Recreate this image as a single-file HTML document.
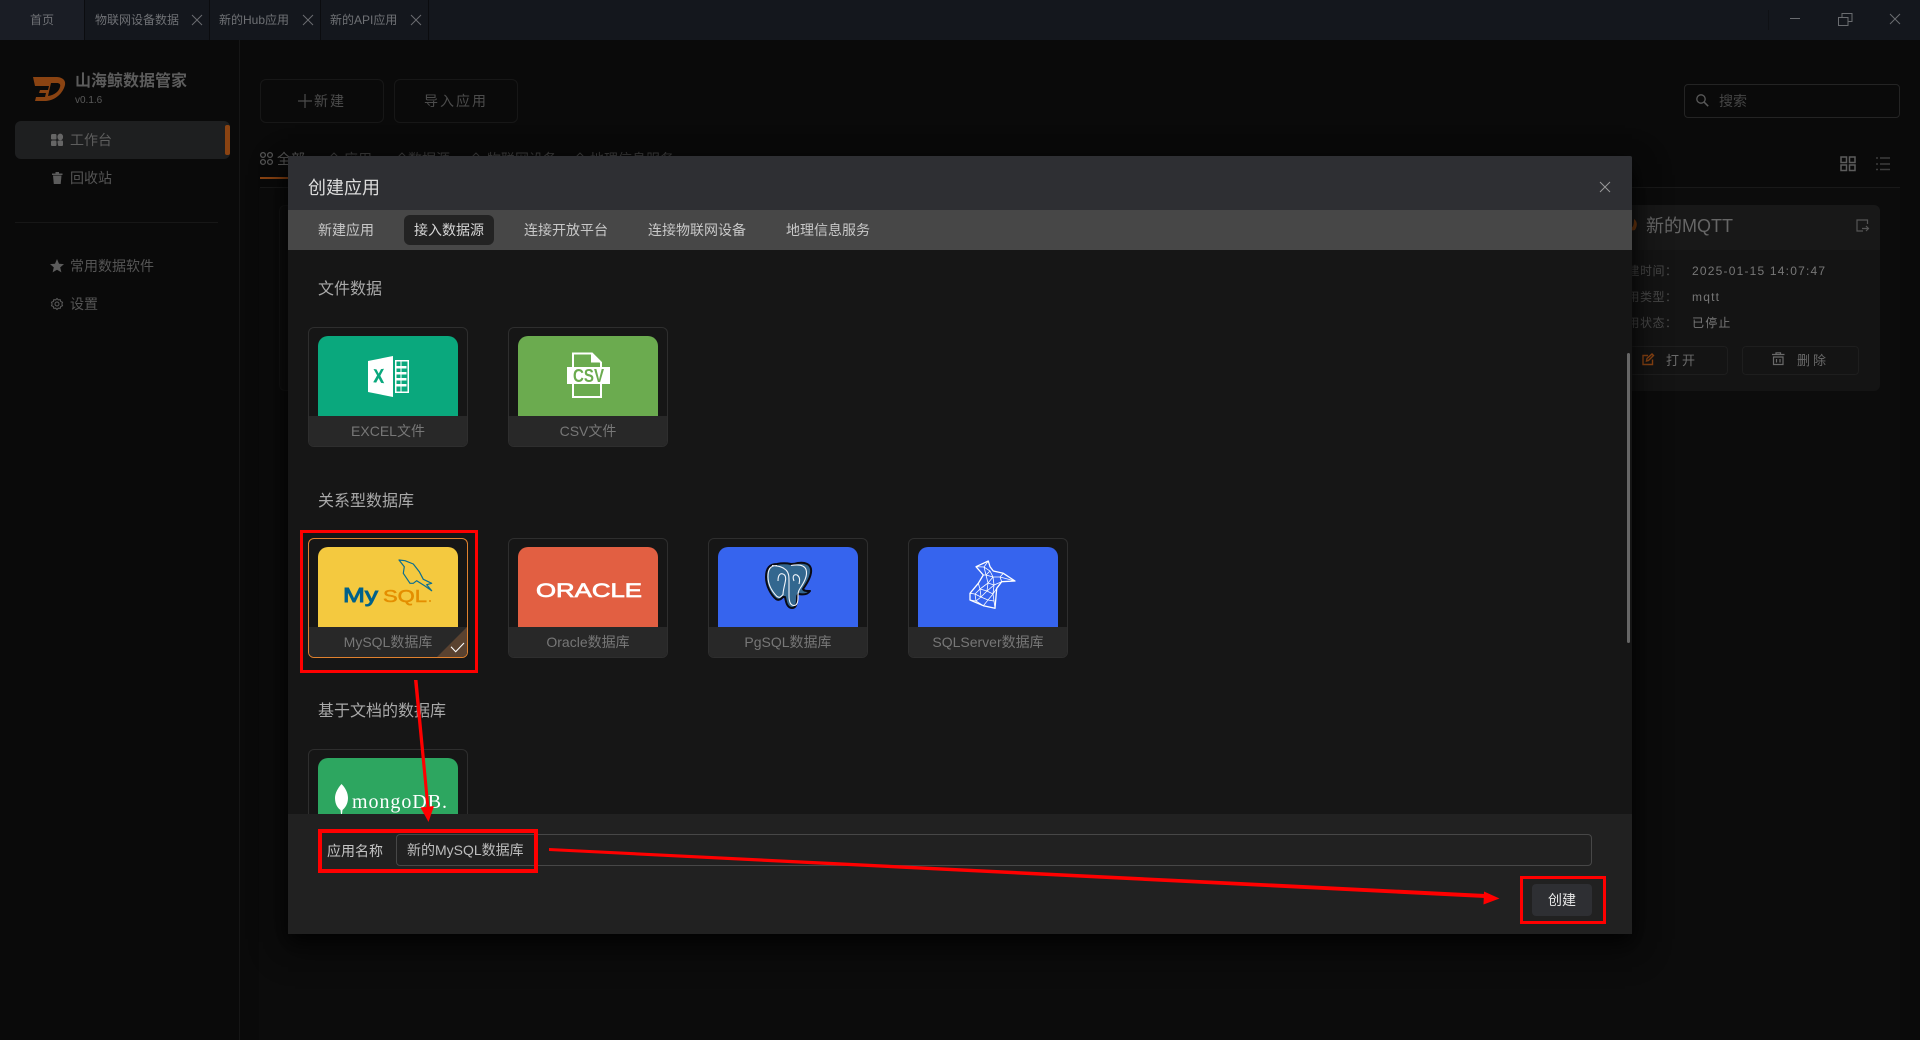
<!DOCTYPE html>
<html lang="zh">
<head>
<meta charset="utf-8">
<title>山海鲸数据管家</title>
<style>
*{box-sizing:border-box;margin:0;padding:0}
html,body{width:1920px;height:1040px;overflow:hidden;background:#0a0a0a}
body{position:relative;font-family:"Liberation Sans","Noto Sans CJK SC",sans-serif;font-size:14px;color:#777}
.a{position:absolute;white-space:nowrap}
.c{display:flex;align-items:center;justify-content:center}
svg{position:absolute;overflow:visible}
.tab{position:absolute;top:0;height:40px;line-height:40px;font-size:12px;color:#6f7175;border-right:1px solid #0b0c0f;background:#14171d}
.x{stroke:#6a6c70;stroke-width:1;fill:none}
.side{position:absolute;left:70px;font-size:14px;line-height:20px;color:#555}
.bgbtn{position:absolute;top:79px;width:124px;height:44px;border:1px solid #171717;border-radius:6px;color:#4c4c4c;font-size:14px;letter-spacing:2px;display:flex;align-items:center;justify-content:center}
.modal{position:absolute;left:288px;top:156px;width:1344px;height:778px;background:#161616;overflow:hidden;border-radius:2px 2px 0 0}
.shadow{position:absolute;left:288px;top:156px;width:1344px;height:778px;box-shadow:0 12px 32px 4px rgba(0,0,0,.36),0 8px 20px rgba(0,0,0,.72)}
.mt{position:absolute;top:54px;left:0;width:1344px;height:40px;background:#474747}
.mtab{position:absolute;top:54px;height:40px;line-height:40px;font-size:14px;color:#c8c8c8}
.sec{position:absolute;left:30px;font-size:16px;line-height:24px;color:#a9a9a9}
.card{position:absolute;width:160px;height:120px;border:1px solid #2e2e2e;border-radius:6px;background:#161616;overflow:hidden}
.img{position:absolute;left:9px;top:8px;width:140px;height:80px;border-radius:10px 10px 0 0;overflow:hidden}
.lb{position:absolute;left:0;top:88px;width:158px;height:30px;background:#282828;line-height:30px;text-align:center;font-size:14px;color:#777}
.rl{position:absolute;font-size:12px;color:#484848;left:1615px;line-height:16px;letter-spacing:.5px}
.rv{position:absolute;font-size:12px;color:#777;left:1692px;letter-spacing:1.2px;line-height:16px}
</style>
</head>
<body>
<!-- title bar -->
<div class="a" style="left:0;top:0;width:1920px;height:40px;background:#14171d"></div>
<div class="tab c" style="left:0;width:85px;background:#1a1d25;color:#6f7175">首页</div>
<div class="tab" style="left:85px;width:125px;padding-left:10px">物联网设备数据</div>
<div class="tab" style="left:210px;width:111px;padding-left:9px">新的Hub应用</div>
<div class="tab" style="left:321px;width:108px;padding-left:9px">新的API应用</div>
<svg style="left:0;top:0" width="1920" height="40">
<path class="x" d="M192 15l10 10m0-10l-10 10M303 15l10 10m0-10l-10 10M411 15l10 10m0-10l-10 10"/>
<path d="M1768.500 10v20" stroke="#0f1115"/>
<path class="x" d="M1790 18.500h10M1838.500 17.500h9.500v8h-9.500zM1842 17v-3.500h10v8h-4M1890 14l10 10m0-10l-10 10"/>
</svg>

<!-- sidebar -->
<div class="a" style="left:239px;top:40px;width:1px;height:1000px;background:#161616"></div>
<svg style="left:33px;top:77px" width="33" height="24" viewBox="0 0 33 24">
<path d="M0 0h23c6 0 10 3 9 8-2 8-9 15-19 16H2l1-4h9l1-4H6l1-3h8l1-4H2zM18 6l-3 13c7-1 11-5 12-9 1-3-1-4-3-4z" fill="#8a4312" fill-rule="evenodd"/>
</svg>
<div class="a" style="left:75px;top:71px;font-size:16px;font-weight:700;line-height:22px;color:#5c5c5c">山海鲸数据管家</div>
<div class="a" style="left:75px;top:94px;font-size:10px;line-height:14px;color:#5a5a5a">v0.1.6</div>
<div class="a" style="left:15px;top:121px;width:215px;height:38px;background:#1e1f20;border-radius:6px"></div>
<div class="a" style="left:225px;top:125px;width:5px;height:30px;background:#8a4312;border-radius:2px"></div>
<svg style="left:51px;top:134px" width="12" height="12"><path d="M0 1.500q0-1.500 1.500-1.500h3q1 0 1 1.500v3q0 1-1 1h-3q-1.500 0-1.500-1zM6.500 3a2.800 2.800 0 1 1 5.500 0a2.800 2.800 0 1 1-5.500 0zM0 8q0-1.500 1.500-1.500h3q1 0 1 1.500v3q0 1-1 1h-3q-1.500 0-1.500-1zM6.500 8q0-1.500 1.500-1.500h3q1 0 1 1.500v3q0 1-1 1h-3q-1 0-1-1z" fill="#666"/></svg>
<div class="side" style="top:130px;color:#5e5e5e">工作台</div>
<svg style="left:52px;top:172px" width="11" height="12"><path d="M0 1.500h10.500v1.500H0zM3.500 0h3.500v1.500H3.500zM1 3.500h8.500l-.8 8.500H1.800z" fill="#5c5c5c"/></svg>
<div class="side" style="top:168px">回收站</div>
<div class="a" style="left:15px;top:222px;width:203px;height:1px;background:#171717"></div>
<svg style="left:50px;top:259px" width="14" height="14" viewBox="0 0 14 14"><path d="M7 0l2 4.700 5 .4-3.800 3.300 1.200 5L7 10.700 2.600 13.400l1.200-5L0 5.100l5-.4z" fill="#5c5c5c"/></svg>
<div class="side" style="top:256px">常用数据软件</div>
<svg style="left:51px;top:298px" width="12" height="12" viewBox="0 0 12 12"><circle cx="6" cy="6" r="2" fill="none" stroke="#5c5c5c"/><path d="M6 .5l1.300 1.400 1.900-.2.500 1.800 1.800.8-.6 1.700.6 1.700-1.800.8-.5 1.800-1.900-.2L6 11.500 4.700 10.100l-1.900.2-.5-1.800-1.800-.8.6-1.700-.6-1.700 1.800-.8.500-1.800 1.900.2z" fill="none" stroke="#5c5c5c"/></svg>
<div class="side" style="top:294px">设置</div>

<!-- background content -->
<div class="bgbtn" style="left:260px"><svg style="position:static;margin-right:2px" width="14" height="14"><path d="M7 0v14M0 7h14" stroke="#4c4c4c" stroke-width="1.200"/></svg>新建</div>
<div class="bgbtn" style="left:394px">导入应用</div>
<svg style="left:260px;top:152px" width="14" height="14"><g fill="none" stroke="#555" stroke-width="1.300"><circle cx="3" cy="3" r="2.400"/><circle cx="10" cy="3" r="2.400"/><circle cx="3" cy="10" r="2.400"/><circle cx="10" cy="10" r="2.400"/></g></svg>
<svg style="left:328px;top:150px" width="260" height="8"><path d="M2 7l4-4 4 4M70 7l4-4 4 4M144 7l4-4 4 4M248 7l4-4 4 4" fill="none" stroke="#3e3e3e"/></svg>
<div class="a" style="left:277px;top:150px;font-size:14px;line-height:18px;color:#555">全部</div>
<div class="a" style="left:344px;top:150px;font-size:14px;line-height:18px;color:#3e3e3e">应用</div>
<div class="a" style="left:408px;top:150px;font-size:14px;line-height:18px;color:#3e3e3e">数据源</div>
<div class="a" style="left:487px;top:150px;font-size:14px;line-height:18px;color:#3e3e3e">物联网设备</div>
<div class="a" style="left:590px;top:150px;font-size:14px;line-height:18px;color:#3e3e3e">地理信息服务</div>
<div class="a" style="left:260px;top:177px;width:60px;height:2px;background:#8a4312"></div>
<div class="a" style="left:260px;top:187px;width:1640px;height:1px;background:#191919"></div>
<div class="a" style="left:259px;top:188px;width:1641px;height:852px;background:#0c0c0c"></div>
<div class="a" style="left:279px;top:205px;width:40px;height:186px;background:#0e0e0e;border:1px solid #141414;border-radius:6px"></div>
<div class="a" style="left:1500px;top:205px;width:380px;height:186px;background:#141414;border-radius:6px"></div>
<div class="a" style="left:1500px;top:205px;width:380px;height:45px;background:#181818;border-radius:6px 6px 0 0"></div>
<svg style="left:1630px;top:218px" width="10" height="14"><path d="M4 1c3 2 4 6 1 11-3 1-5 0-5-2 3 0 4-3 4-9z" fill="#7a3d10"/></svg>
<div class="a" style="left:1646px;top:213px;font-size:18px;line-height:26px;color:#666">新的MQTT</div>
<svg style="left:1856px;top:219px" width="13" height="13"><path d="M11.500 5V1H1v11h6M6 9.500h6.500M10 7l2.500 2.500L10 12" fill="none" stroke="#555" stroke-width="1.200"/></svg>
<div class="rl" style="top:263px">创建时间：</div><div class="rv" style="top:263px">2025-01-15 14:07:47</div>
<div class="rl" style="top:289px">应用类型：</div><div class="rv" style="top:289px">mqtt</div>
<div class="rl" style="top:315px">应用状态：</div><div class="rv" style="top:315px">已停止</div>
<div class="a" style="left:1612px;top:346px;width:116px;height:29px;border:1px solid #1e1e1e;border-radius:4px"></div>
<div class="a" style="left:1742px;top:346px;width:117px;height:29px;border:1px solid #1e1e1e;border-radius:4px"></div>
<svg style="left:1642px;top:353px" width="12" height="13"><path d="M10.500 6.500V11.500H1V2.500h5M4.500 8l.5-2.500 5-4.500 1.500 1.500-5 5z" fill="none" stroke="#8a4312" stroke-width="1.400"/></svg>
<div class="a" style="left:1666px;top:352px;font-size:13px;line-height:17px;letter-spacing:3px;color:#6a6a6a">打开</div>
<svg style="left:1772px;top:352px" width="13" height="13"><path d="M0 2.500h12.500M4 2.500V.8h4.500v1.700M1.500 5h9.500v7.500H1.500zM4.500 7v3.500M8 7v3.500" fill="none" stroke="#6a6a6a" stroke-width="1.200"/></svg>
<div class="a" style="left:1797px;top:352px;font-size:13px;line-height:17px;letter-spacing:3px;color:#6a6a6a">删除</div>
<svg style="left:1696px;top:94px" width="13" height="13"><circle cx="5" cy="5" r="4.200" fill="none" stroke="#5a5a5a" stroke-width="1.300"/><path d="M8.200 8.200l4 4" stroke="#5a5a5a" stroke-width="1.500"/></svg>
<div class="a" style="left:1684px;top:84px;width:216px;height:34px;border:1px solid #242424;border-radius:4px"></div>
<div class="a" style="left:1719px;top:92px;font-size:14px;line-height:18px;color:#454545">搜索</div>
<svg style="left:1840px;top:155px" width="60" height="17"><g fill="none" stroke="#5c5c5c" stroke-width="1.500"><rect x="1" y="2" width="5.500" height="5.500"/><rect x="9.500" y="2" width="5.500" height="5.500"/><rect x="1" y="10" width="5.500" height="5.500"/><rect x="9.500" y="10" width="5.500" height="5.500"/></g><path d="M36 3h2M40 3h10M36 9h2M40 9h10M36 14.500h2M40 14.500h10" stroke="#3d3d3d" stroke-width="1.400"/></svg>

<div class="shadow"></div>
<!-- modal -->
<div class="modal">
  <div class="a" style="left:0;top:0;width:1344px;height:54px;background:#2e2f33"></div>
  <div class="a" style="left:20px;top:19px;font-size:18px;line-height:26px;color:#dcdcdc">创建应用</div>
  <svg style="left:1312px;top:26px" width="11" height="11"><path d="M0 0l10 10m0-10L0 10" stroke="#999" fill="none"/></svg>
  <div class="mt"></div>
  <div class="mtab" style="left:30px">新建应用</div>
  <div class="a" style="left:116px;top:59px;width:90px;height:30px;border-radius:6px;background:#232323"></div>
  <div class="mtab" style="left:126px;color:#d6d6d6">接入数据源</div>
  <div class="mtab" style="left:236px">连接开放平台</div>
  <div class="mtab" style="left:360px">连接物联网设备</div>
  <div class="mtab" style="left:498px">地理信息服务</div>

  <div class="sec" style="top:122px">文件数据</div>
  <div class="card" style="left:20px;top:171px">
    <div class="img" style="background:#0aa87d">
      <svg style="left:0;top:0" width="140" height="80">
        <path d="M50 25l25-5v41l-25-5z" fill="#fff"/>
        <path d="M77 24h14v33H77z" fill="#fff"/>
        <path d="M78.500 25.500h11v30h-11z" fill="#0aa87d"/>
        <path d="M77 30h11.500v2.500H77zM77 36h11.500v2.500H77zM77 42h11.500v2.500H77zM77 48h11.500v2.500H77zM82.500 25.500h1v30h-1z" fill="#fff"/>
        <path d="M55.500 33l3 .4 2.200 4.200 2.300-4.500 3-.4-3.700 7 3.900 7.500-3.100-.3-2.500-4.800-2.400 4.500-3-.3 3.900-6.900z" fill="#0aa87d"/>
      </svg>
    </div>
    <div class="lb">EXCEL文件</div>
  </div>
  <div class="card" style="left:220px;top:171px">
    <div class="img" style="background:#6bab4f">
      <svg style="left:0;top:0" width="140" height="80">
        <path d="M55 32V17.500h19l9 9V32M83 48v13H55V48" fill="none" stroke="#fff" stroke-width="2"/>
        <path d="M73 17.500v9h10" fill="#fff"/>
        <rect x="49" y="31" width="43" height="17" fill="#fff"/>
        <text x="70.500" y="46" font-size="18" font-weight="700" text-anchor="middle" fill="#6bab4f" textLength="31" lengthAdjust="spacingAndGlyphs">CSV</text>
      </svg>
    </div>
    <div class="lb">CSV文件</div>
  </div>

  <div class="sec" style="top:334px">关系型数据库</div>
  <div class="card" style="left:20px;top:382px;border-color:#e0812e">
    <div class="img" style="background:#f4c93f">
      <svg style="left:0;top:0" width="140" height="80">
        <path d="M81 13L87 13.700 95.300 17 101.300 24.700 105.300 32.300 113.700 36.300 108.700 37.700 113.700 43.700 107 39 98.700 33.700 95.300 36.300 92 36.300 85.300 26.300 86.300 19.700z" fill="none" stroke="#0b6e90" stroke-width="1.200" stroke-linejoin="round"/>
        <text x="25" y="55" font-size="20" fill="#00618a" stroke="#00618a" stroke-width=".9" textLength="35" lengthAdjust="spacingAndGlyphs">My</text>
        <text x="65" y="55" font-size="17.500" fill="#e48e00" stroke="#e48e00" stroke-width=".5" textLength="44" lengthAdjust="spacingAndGlyphs">SQL</text>
        <circle cx="112" cy="54" r="1" fill="#e48e00"/>
      </svg>
    </div>
    <div class="lb">MySQL数据库</div>
    <svg style="left:0;top:0" width="158" height="118">
      <path d="M158 88v30h-30z" fill="#5a4230"/>
      <path d="M142 107.800l4.700 4.900 8.300-8.700" fill="none" stroke="#fff" stroke-width="1.100"/>
    </svg>
  </div>
  <div class="card" style="left:220px;top:382px">
    <div class="img" style="background:#e25f42">
      <svg style="left:0;top:0" width="140" height="80">
        <text x="18" y="50" font-size="19.500" fill="#fff" stroke="#fff" stroke-width=".7" textLength="106" lengthAdjust="spacingAndGlyphs">ORACLE</text>
      </svg>
    </div>
    <div class="lb">Oracle数据库</div>
  </div>
  <div class="card" style="left:420px;top:382px">
    <div class="img" style="background:#3664ee">
      <svg style="left:0;top:0" width="140" height="80">
        <path d="M59 17c-8 0-11 5-11 13 0 9 5 18 10 22 3 2 5 0 7-2l2 0c1 5 2 11 7 11 4 0 5-4 5-9 0-3 0-4 2-5 5 1 9 0 11-3-4 0-6 0-7-2 5-7 9-14 8-20-1-5-6-7-13-6-3 1-5 1-7 1-5-1-9-1-14 0z" fill="#33678f" stroke="#0a0a14" stroke-width="2" stroke-linejoin="round"/>
        <path d="M59 18.500c-7 0-9 4-9 11 0 9 5 16 9 20 3 2 4 0 6-2M73 18.500c6-1 13-1 15 4 2 6-2 13-6 19-2 3-2 5-2 9 0 5-1 8-4 8-4 0-5-5-5-10V34c0-4 0-8-3-11-3-3-7-4-14-4.500M60 34c0-7 3-8 5-7 3 1 3 5 2 9-1 5-2 8-2 12M76 34c-2-5 0-7 3-6 3 2 3 5 2 9" fill="none" stroke="#f2f5fa" stroke-width="1.100"/>
      </svg>
    </div>
    <div class="lb">PgSQL数据库</div>
  </div>
  <div class="card" style="left:620px;top:382px">
    <div class="img" style="background:#3664ee">
      <svg style="left:0;top:0" width="140" height="80">
        <path d="M58 19.700L70.300 14 72 19.700 75.300 24 85.300 26.300 97 34 83.700 34.700 78.700 41.300 77 61.300 65.300 58.700 52 53 52 46.300 60.300 36.300 65.300 28z" fill="none" stroke="#fff" stroke-width="1.300" stroke-linejoin="round"/>
        <path d="M58 19.700L66 20 70.300 14M66 20L72 24 68 28 66 20M65.300 28L68 28 75 30 72 24M75 30L82 30 85.300 26.300M82 30L97 34M82 30L83.700 34.700 76 38 75 30M68 28L70 36 75 30M70 36L76 38 69 44 70 36 62 42 69 44 75 47 76 38M60.300 36.300L62 42 57 47 52 46.300M57 47L63 50 62 42M63 50L69 44M63 50L70 53 75 47 78.700 41.300M75 47L76 54 70 53 65.300 58.700 58 54 63 50M58 54L52 53M58 54L57 47M76 54L77 61.300" fill="none" stroke="#fff" stroke-width=".8"/>
      </svg>
    </div>
    <div class="lb">SQLServer数据库</div>
  </div>

  <div class="sec" style="top:544px">基于文档的数据库</div>
  <div class="card" style="left:20px;top:593px">
    <div class="img" style="background:#2da660">
      <svg style="left:0;top:0" width="140" height="80">
        <path d="M23.500 26c4 4 6.500 9 6.500 14 0 6-3 10-5.500 12l-.5 4h-1l-.500-4c-3-2-5.500-6-5.500-12 0-5 3-10 6.500-14z" fill="#fff"/>
        <text x="34" y="50" font-family="Liberation Serif,serif" font-size="20" fill="#fff" textLength="95" lengthAdjust="spacing">mongoDB.</text>
      </svg>
    </div>
    <div class="lb">MongoDB数据库</div>
  </div>

  <div class="a" style="left:1339px;top:197px;width:3px;height:290px;background:#666;border-radius:2px"></div>

  <!-- footer -->
  <div class="a" style="left:0;top:658px;width:1344px;height:120px;background:#212121"></div>
  <div class="a" style="left:39px;top:685px;font-size:14px;line-height:20px;color:#c4c4c4">应用名称</div>
  <div class="a" style="left:108px;top:678px;width:1196px;height:32px;border:1px solid #474747;border-radius:4px;padding-left:10px;line-height:30px;font-size:14px;color:#bdbdbd">新的MySQL数据库</div>
  <div class="a c" style="left:1244px;top:728px;width:60px;height:32px;background:#2e2f33;border-radius:4px;font-size:14px;color:#e6e6e6">创建</div>
</div>

<!-- annotations -->
<svg style="left:0;top:0" width="1920" height="1040">
  <g fill="none" stroke="#f00" stroke-width="3">
    <rect x="301.500" y="531.500" width="175" height="140"/>
    <rect x="1521.500" y="877.500" width="83" height="45"/>
  </g>
  <rect x="320" y="831" width="216" height="40" fill="none" stroke="#f00" stroke-width="4"/>
  <path d="M414 680h3.500l12 128h-3z" fill="#f00"/>
  <path d="M420.500 807.500l13.500-1.500-5.500 16z" fill="#f00"/>
  <path d="M549 848l936 46v4L549 851z" fill="#f00"/>
  <path d="M1484 891.500l15.500 7-16 6z" fill="#f00"/>
</svg>
</body>
</html>
